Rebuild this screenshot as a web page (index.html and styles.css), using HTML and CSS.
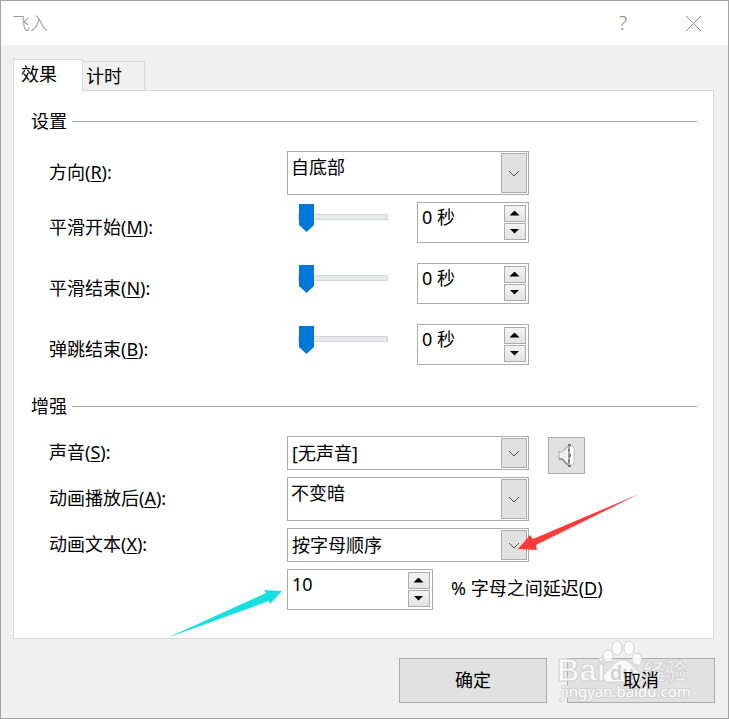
FILE: index.html
```html
<!DOCTYPE html>
<html lang="zh-CN">
<head>
<meta charset="utf-8">
<meta name="viewport" content="width=device-width, initial-scale=1">
<title>飞入</title>
<link rel="stylesheet" href="styles.css">
</head>
<body>
<main class="dialog">
  <header class="titlebar">
    <h1 class="title">飞入</h1>
    <button class="caption-btn help" type="button" aria-label="帮助">?</button>
    <button class="caption-btn" type="button" aria-label="关闭">
      <svg width="17" height="17" viewBox="0 0 17 17"><path d="M1 1L16 16M16 1L1 16" stroke="#8c8c8c" fill="none"/></svg>
    </button>
  </header>
  <form class="body">
    <div class="tabs" role="tablist">
      <button class="tab active" type="button" role="tab" aria-selected="true">效果</button>
      <button class="tab" type="button" role="tab" aria-selected="false">计时</button>
    </div>
    <div class="panel" role="tabpanel">
      <h2 class="group-title">设置</h2>
      <div class="rows">
        <div class="row">
          <label for="dir">方向(<u>R</u>):</label>
          <div class="combo tall"><select id="dir"><option>自底部</option></select><span class="drop"><svg width="12" height="7" viewBox="0 0 12 7"><path d="M1 1L6 6L11 1"/></svg></span></div>
        </div>
        <div class="row timing">
          <label for="m">平滑开始(<u>M</u>):</label>
          <input class="slider" type="range" min="0" max="10" value="0" aria-label="平滑开始">
          <div class="spin"><input id="m" type="text" value="0 秒"><span class="steps"><button type="button" class="up" aria-label="增加"></button><button type="button" class="down" aria-label="减少"></button></span></div>
        </div>
        <div class="row timing">
          <label for="n">平滑结束(<u>N</u>):</label>
          <input class="slider" type="range" min="0" max="10" value="0" aria-label="平滑结束">
          <div class="spin"><input id="n" type="text" value="0 秒"><span class="steps"><button type="button" class="up" aria-label="增加"></button><button type="button" class="down" aria-label="减少"></button></span></div>
        </div>
        <div class="row timing">
          <label for="b">弹跳结束(<u>B</u>):</label>
          <input class="slider" type="range" min="0" max="10" value="0" aria-label="弹跳结束">
          <div class="spin"><input id="b" type="text" value="0 秒"><span class="steps"><button type="button" class="up" aria-label="增加"></button><button type="button" class="down" aria-label="减少"></button></span></div>
        </div>
      </div>
      <h2 class="group-title second">增强</h2>
      <div class="rows">
        <div class="row">
          <label for="snd">声音(<u>S</u>):</label>
          <div class="combo"><select id="snd"><option>[无声音]</option></select><span class="drop"><svg width="12" height="7" viewBox="0 0 12 7"><path d="M1 1L6 6L11 1"/></svg></span></div>
          <button class="speaker" type="button" aria-label="音量">
            <svg width="17" height="25" viewBox="0 0 17 25">
              <path d="M11 3H14L16 5V20L14 22H11Z" fill="#fff" stroke="#bdbdbd"/>
              <path d="M1 9H4L10 2V22L4 16H1Z" fill="#f4f4f4"/>
              <path d="M5 8L10 3" stroke="#bdbdbd" stroke-width="2"/>
              <path d="M1 9H4M1 8V16" stroke="#a8a8a8"/>
              <path d="M1 16H4L10 22" fill="none" stroke="#9a9a9a" stroke-width="2"/>
              <path d="M4 11H8M4 14H8" stroke="#dcdcdc"/>
              <path d="M11 2V24" stroke="#a4a4a4" stroke-width="2"/>
              <path d="M10 1H13V3H10ZM10 6H12V8H10ZM11 11H13V14H11ZM10 17H12V19H10ZM10 22H13V24H10Z" fill="#777"/>
            </svg>
          </button>
        </div>
        <div class="row">
          <label for="after">动画播放后(<u>A</u>):</label>
          <div class="combo tall"><select id="after"><option>不变暗</option></select><span class="drop"><svg width="12" height="7" viewBox="0 0 12 7"><path d="M1 1L6 6L11 1"/></svg></span></div>
        </div>
        <div class="row">
          <label for="text">动画文本(<u>X</u>):</label>
          <div class="combo"><select id="text"><option>按字母顺序</option></select><span class="drop"><svg width="12" height="7" viewBox="0 0 12 7"><path d="M1 1L6 6L11 1"/></svg></span>
            <svg class="arrow red" width="122" height="57" viewBox="0 0 122 57"><path d="M0 55L12 41L15 45L121 0L18 51L19 56Z" fill="#fb3b3b"/></svg>
          </div>
        </div>
        <div class="row delay">
          <div class="spin wide"><input id="d" type="text" value="10"><span class="steps"><button type="button" class="up" aria-label="增加"></button><button type="button" class="down" aria-label="减少"></button></span>
            <svg class="arrow cyan" width="116" height="49" viewBox="0 0 116 49"><path d="M115 1L97 0L99 3L0 48L102 11L103 14Z" fill="#19dfe0"/></svg>
          </div>
          <label for="d">% 字母之间延迟(<u>D</u>)</label>
        </div>
      </div>
    </div>
    <footer class="actions">
      <button class="action" type="submit"><span>确定</span></button>
      <button class="action" type="button"><span>取消</span></button>
      <svg class="mark" width="144" height="74" viewBox="0 0 144 74" aria-hidden="true">
        <g fill="#fff" fill-opacity=".8" stroke="#d2d2d2">
          <ellipse cx="65" cy="14" rx="5" ry="7"/><ellipse cx="77" cy="14" rx="5" ry="7"/>
          <ellipse cx="56" cy="22" rx="5" ry="6"/><ellipse cx="85" cy="25" rx="5" ry="6"/>
          <path d="M71 26C62 26 61 34 55 37C48 42 52 49 59 48H82C91 48 92 41 86 37C80 34 79 26 71 26Z"/>
          <text class="mark-name" x="5" y="47">Bai</text>
          <text class="mark-cn" x="91" y="45">经验</text>
        </g>
        <text class="mark-du" x="58" y="46">du</text>
        <text class="mark-url" x="9" y="63">jingyan.baidu.com</text>
      </svg>
    </footer>
  </form>
</main>
</body>
</html>
```
FILE: styles.css
```css
* { box-sizing: border-box; }

body, button, input, select {
  font: 400 18px/24px "Noto Sans", "Noto Sans CJK SC", sans-serif;
  color: #000;
}

body { margin: 0; }
button, input, select { margin: 0; border-radius: 0; }
h1, h2 { margin: 0; font: inherit; }

u { text-underline-offset: 2px; text-decoration-thickness: 1px; text-decoration-skip-ink: none; }

.dialog {
  display: flex;
  flex-direction: column;
  min-height: 100vh;
  border: 1px solid #a3a3a3;
  background: #f0f0f0;
}

.titlebar {
  display: flex;
  align-items: center;
  height: 44px;
  padding: 0 18px 0 11px;
  background: #fff;
}

.title { flex: 1; color: #999; font-weight: 300; }

.caption-btn {
  display: grid;
  place-items: center;
  width: 34px;
  height: 34px;
  padding: 0;
  border: 0;
  background: none;
  color: #8c8c8c;
}

.help { margin-right: 36px; font-size: 20px; font-weight: 300; }

.body {
  flex: 1;
  display: flex;
  flex-direction: column;
  padding: 14px 13px 15px 12px;
}

.tabs { display: flex; align-items: flex-end; }

.tab {
  height: 29px;
  width: 62px;
  padding: 0 0 0 3px;
  border: 1px solid #d9d9d9;
  border-width: 1px 1px 0 0;
  background: #f0f0f0;
  text-align: left;
}

.tab.active {
  position: relative;
  z-index: 1;
  width: 70px;
  height: 32px;
  margin-bottom: -1px;
  padding: 0 0 3px 7px;
  border-width: 1px 1px 0 1px;
  background: #fff;
}

.panel {
  flex: 1;
  margin-right: 1px;
  padding: 18px 16px 28px 17px;
  border: 1px solid #d9d9d9;
  background: #fff;
}

.group-title {
  display: flex;
  align-items: center;
  gap: 5px;
  margin-bottom: 18px;
}

.group-title::after { content: ""; flex: 1; height: 1px; background: #a0a0a0; }
.group-title.second { margin-top: 29px; }

.rows {
  display: flex;
  flex-direction: column;
  gap: 7px;
  padding-left: 18px;
}

.row {
  display: grid;
  grid-template-columns: 238px 242px 38px;
  align-items: center;
}

.row label { padding-bottom: 3px; }

.timing {
  grid-template-columns: 249px 91px 28px 112px;
  align-items: start;
}

.timing label { padding: 13px 0 0; }
.timing .spin { grid-column: 4; }
.timing + .timing { margin-top: 13px; }

.combo {
  position: relative;
  height: 34px;
  border: 1px solid #acacac;
  background: #fff;
}

.tall { height: 44px; }

.combo select {
  appearance: none;
  display: block;
  width: 100%;
  height: 100%;
  padding: 0 30px 1px 4px;
  border: 0;
  background: none;
}

.tall select { padding: 0 30px 12px 3px; }

.drop {
  position: absolute;
  inset: 1px 1px 1px auto;
  display: grid;
  place-items: center;
  width: 26px;
  padding-right: 1px;
  border: 1px solid #acacac;
  background: #e1e1e1;
  pointer-events: none;
}

.drop path { fill: none; stroke: #555; }

.slider {
  appearance: none;
  width: 90px;
  height: 28px;
  margin: 2px 0 0;
  background: linear-gradient(#d6d6d6, #d6d6d6) 0 10px / 100% 6px no-repeat;
}

.slider::-webkit-slider-runnable-track {
  height: 28px;
  background: linear-gradient(#e7eaea, #e7eaea) 1px 11px / 88px 4px no-repeat;
}

.slider::-webkit-slider-thumb {
  appearance: none;
  width: 15px;
  height: 28px;
  margin-left: 1px;
  background: #0078d7;
  clip-path: polygon(0 0, 100% 0, 100% 75%, 50% 100%, 0 75%);
}

.spin {
  position: relative;
  display: flex;
  height: 41px;
  border: 1px solid #acacac;
  background: #fff;
}

.spin input {
  flex: 1;
  min-width: 0;
  padding: 0 0 11px 4px;
  border: 0;
  background: none;
}

.steps {
  display: flex;
  flex-direction: column;
  gap: 1px;
  padding: 2px;
}

.steps button {
  display: grid;
  place-items: center;
  flex: 1;
  width: 22px;
  padding: 0 1px 1px 0;
  border: 1px solid #acacac;
  background: linear-gradient(#f2f2f2, #e4e4e4);
}

.steps button::before {
  content: "";
  width: 10px;
  height: 5px;
  background: #000;
  clip-path: polygon(50% 0, 100% 100%, 0 100%);
}

.steps .down::before { clip-path: polygon(0 0, 100% 0, 50% 100%); }

.speaker {
  display: grid;
  place-items: center;
  align-self: start;
  width: 37px;
  height: 37px;
  margin: 1px 0 -4px 19px;
  padding: 0;
  border: 1px solid #acacac;
  background: #e1e1e1;
}

.delay {
  grid-template-columns: 146px 1fr;
  gap: 18px;
  padding-left: 238px;
}

.arrow { position: absolute; pointer-events: none; }
.red { left: 230px; top: -35px; }
.cyan { left: -121px; top: 20px; }

.actions {
  position: relative;
  display: flex;
  justify-content: flex-end;
  gap: 20px;
  padding-top: 19px;
}

.action {
  width: 148px;
  height: 45px;
  padding: 0 0 2px;
  border: 1px solid #adadad;
  background: #e1e1e1;
}

.action span { position: relative; z-index: 1; }

.mark {
  position: absolute;
  right: 19px;
  bottom: -5px;
  pointer-events: none;
}

.mark-name { font: 700 31px "Liberation Sans", sans-serif; }
.mark-cn { font: 700 22px "Noto Sans CJK SC", sans-serif; }
.mark-du { font: 700 20px "Liberation Sans", sans-serif; fill: #d2d2d2; }
.mark-url { font: 400 15px "Noto Sans", sans-serif; fill: #fff; stroke: #d2d2d2; stroke-width: 2px; paint-order: stroke; }
```
